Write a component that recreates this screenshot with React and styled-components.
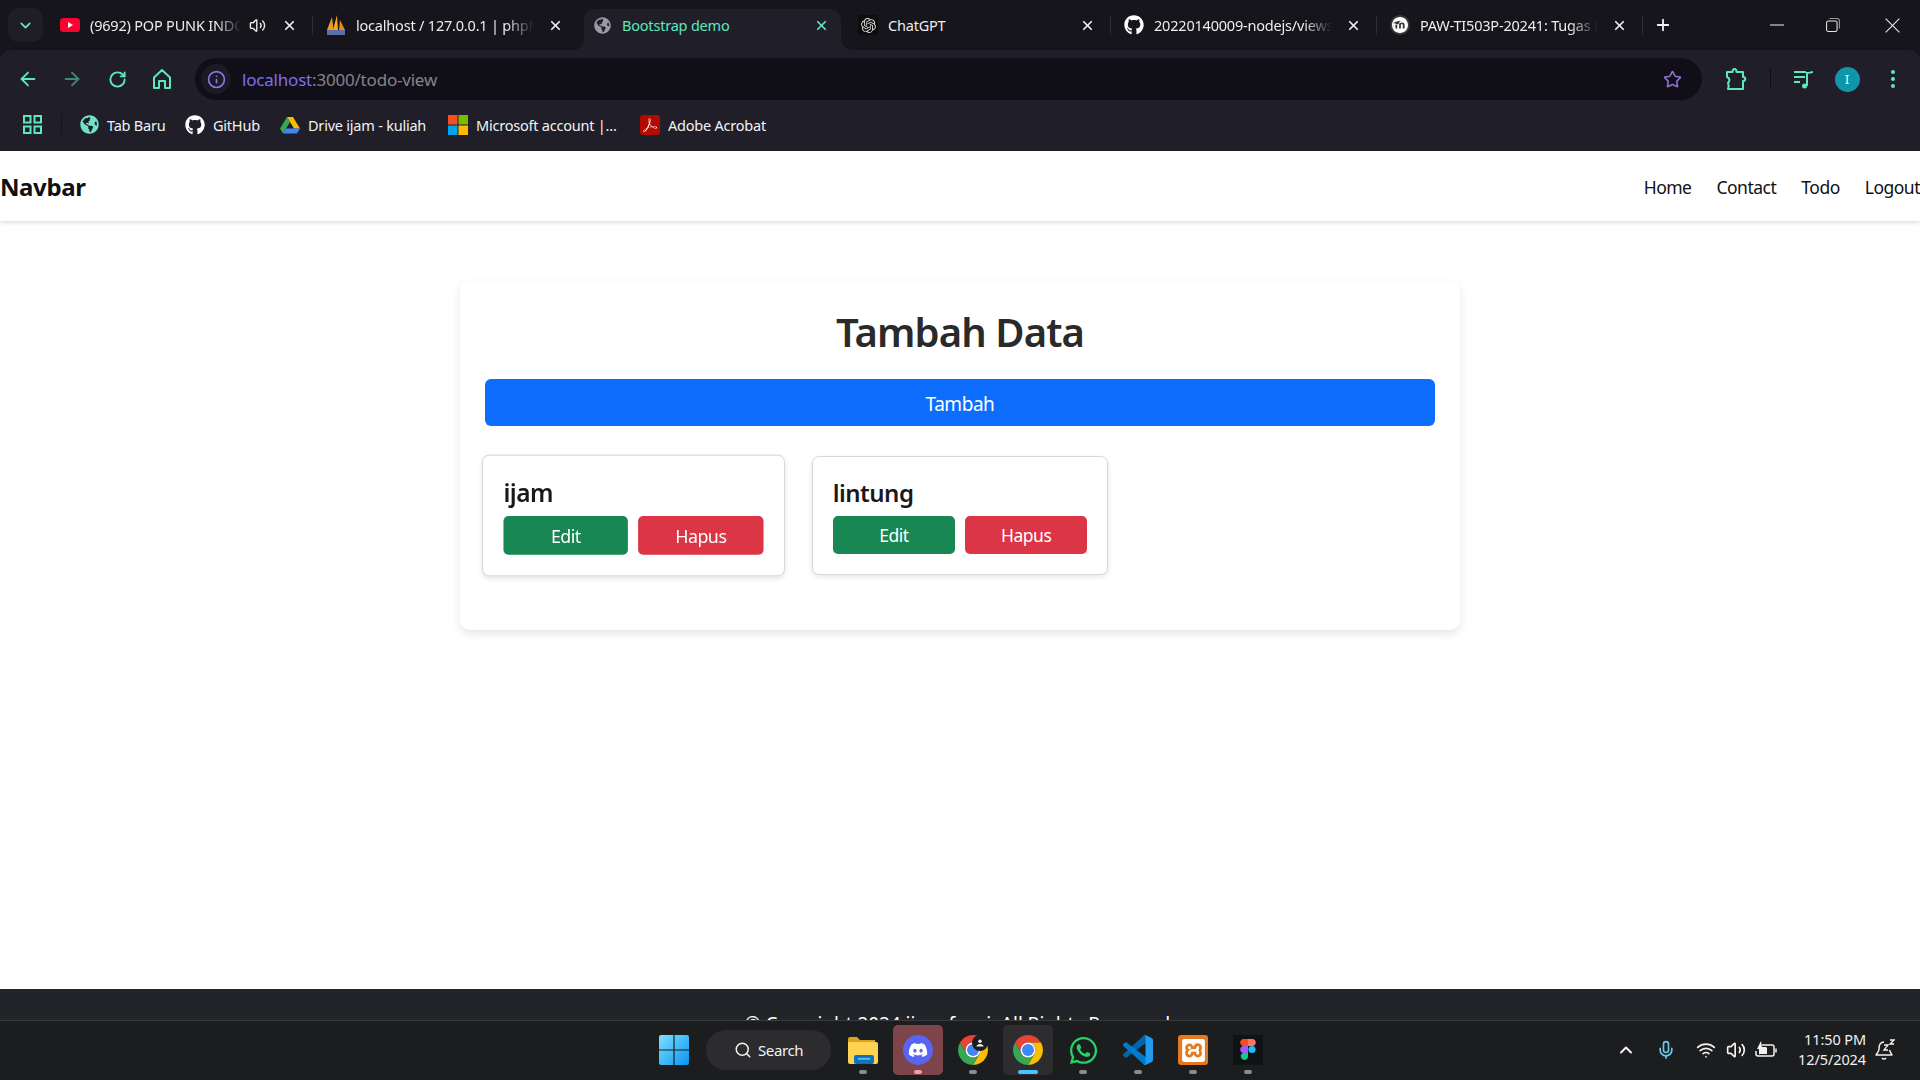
import styled, { createGlobalStyle } from 'styled-components';
import {
  ArrowLeft, ArrowRight, RotateCw, Info, Star, X, Plus, Volume2, Search, Mic, Wifi,
  ChevronUp, ChevronDown,
} from 'lucide-react';
import { FaGithub, FaGlobeAmericas, FaWhatsapp, FaDiscord } from 'react-icons/fa';
import { SiOpenai, SiMoodle, SiXampp, SiAdobeacrobatreader } from 'react-icons/si';

const MINT = '#5ce8bb';
const TOOLBAR = '#201f29';
const STRIP = '#16151c';
const UI_FONT = '"Noto Sans", "Open Sans", sans-serif';

const GlobalStyle = createGlobalStyle`
  html, body {
    margin: 0;
    padding: 0;
    background: #fff;
    overflow: hidden;
  }
  * {
    box-sizing: border-box;
  }
`;

const Screen = styled.div`
  width: 1920px;
  height: 1080px;
  display: flex;
  flex-direction: column;
  overflow: hidden;
  background: ${STRIP};
  font-family: ${UI_FONT};
`;

/* ---- tab strip ---- */
const TabStrip = styled.div`
  height: 50px;
  flex: none;
  display: flex;
  align-items: stretch;
  padding-left: 8px;
  color: #ececec;
`;

const TabMenu = styled.div`
  width: 35px;
  height: 34px;
  margin: 8px 1px 0 0;
  border-radius: 10px;
  background: #1f1e27;
  color: ${MINT};
  display: flex;
  align-items: center;
  justify-content: center;
`;

const TabItem = styled.div`
  position: relative;
  width: 266px;
  flex: none;
  display: flex;
  align-items: center;
  padding: 0 13px 0 16px;
  color: ${(p) => (p.$active ? MINT : '#ececec')};

  ${(p) => p.$active && `
    &::before {
      content: '';
      position: absolute;
      inset: 9px 1px 0 8px;
      background: ${TOOLBAR};
      border-radius: 11px 11px 0 0;
    }
    &::after {
      content: '';
      position: absolute;
      left: -2px;
      right: -9px;
      bottom: 0;
      height: 10px;
      background:
        radial-gradient(circle at 0 0, transparent 9.5px, ${TOOLBAR} 10px) left / 10px 10px no-repeat,
        radial-gradient(circle at 100% 0, transparent 9.5px, ${TOOLBAR} 10px) right / 10px 10px no-repeat;
    }
  `}
`;

const TabFavicon = styled.span`
  position: relative;
  z-index: 1;
  width: 20px;
  height: 20px;
  flex: none;
  display: flex;
  align-items: center;
  justify-content: center;
  margin-right: 10px;
  border-radius: ${(p) => (p.$round ? '50%' : '3px')};
  background: ${(p) => p.$bg || 'transparent'};
`;

const TabTitle = styled.span`
  position: relative;
  z-index: 1;
  flex: 1;
  min-width: 0;
  overflow: hidden;
  white-space: nowrap;
  font-size: 14.5px;
  letter-spacing: -0.2px;
  line-height: 20px;
  ${(p) => p.$fade && `
    -webkit-mask-image: linear-gradient(to right, #000 84%, transparent 100%);
    mask-image: linear-gradient(to right, #000 84%, transparent 100%);
  `}
`;

const TabButton = styled.span`
  position: relative;
  z-index: 1;
  flex: none;
  margin-left: ${(p) => p.$gap || 0}px;
  display: flex;
  align-items: center;
  justify-content: center;
`;

const TabSeparator = styled.span`
  position: absolute;
  right: -3px;
  top: 16px;
  width: 1px;
  height: 19px;
  background: #2e2d36;
`;

const NewTab = styled.div`
  width: 46px;
  display: flex;
  align-items: center;
  justify-content: center;
`;

const WindowControls = styled.div`
  margin-left: auto;
  display: grid;
  grid-template-columns: 50px 62px 56px;
  align-items: center;
  justify-items: center;
`;

/* ---- toolbar and bookmarks ---- */
const ToolbarArea = styled.div`
  flex: none;
  background: ${TOOLBAR};
  border-radius: 11px 11px 0 0;
`;

const Toolbar = styled.div`
  height: 50px;
  display: flex;
  align-items: flex-end;
  padding-left: 6px;
`;

const ToolbarRow = styled.div`
  height: 42px;
  flex: 1;
  display: flex;
  align-items: center;
`;

const NavButton = styled.span`
  width: 44px;
  flex: none;
  margin-left: ${(p) => p.$gap || 0}px;
  display: flex;
  justify-content: center;
  color: ${(p) => (p.$dim ? '#3f8a72' : MINT)};
`;

const AddressBar = styled.div`
  flex: 1;
  height: 42px;
  margin-left: 11px;
  border-radius: 21px;
  background: #100f18;
  display: flex;
  align-items: center;
  padding: 0 20px 0 6px;
`;

const SiteInfo = styled.span`
  width: 30px;
  height: 30px;
  border-radius: 50%;
  background: #1c1b25;
  color: #8d78e8;
  display: flex;
  align-items: center;
  justify-content: center;
  margin-right: 11px;
`;

const UrlText = styled.div`
  flex: 1;
  font-size: 17px;
  letter-spacing: -0.2px;
  color: #85838a;
`;

const UrlHost = styled.span`
  color: #7f6cf2;
`;

const ToolbarActions = styled.div`
  flex: none;
  display: grid;
  grid-template-columns: 68px 1px 65px 24px 60px;
  align-items: center;
  justify-items: center;
`;

const ToolbarDivider = styled.span`
  width: 1px;
  height: 20px;
  background: #0f0e14;
`;

const Avatar = styled.span`
  width: 25px;
  height: 25px;
  margin-right: 2px;
  border-radius: 50%;
  background: #0e97a8;
  color: #fff;
  font-size: 12px;
  display: flex;
  align-items: center;
  justify-content: center;
`;

const Dots = styled.span`
  width: 5px;
  display: flex;
  flex-direction: column;
  gap: 3px;
  margin-left: 6px;
  span {
    width: 4px;
    height: 4px;
    border-radius: 50%;
    background: ${MINT};
  }
`;

const BookmarkBar = styled.div`
  height: 51px;
  display: flex;
  align-items: center;
  padding-bottom: 2px;
  color: #f2f2f2;
  font-size: 14.5px;
  letter-spacing: -0.22px;
`;

const AppsButton = styled.span`
  width: 61px;
  flex: none;
  display: flex;
  justify-content: center;
  padding-left: 3px;
  color: ${MINT};
`;

const BookmarkDivider = styled.span`
  width: 1px;
  height: 20px;
  margin-right: 18px;
  background: #16151c;
`;

const Bookmark = styled.div`
  width: ${(p) => (p.$w ? `${p.$w}px` : 'auto')};
  flex: none;
  display: flex;
  align-items: center;
  gap: 8px;
  white-space: nowrap;
`;

/* ---- page ---- */
const Navbar = styled.nav`
  height: 70px;
  flex: none;
  position: relative;
  z-index: 1;
  background: #fff;
  box-shadow: 0 2px 4px rgba(0, 0, 0, 0.12);
  display: flex;
  align-items: center;
  justify-content: space-between;
`;

const Brand = styled.div`
  font-size: 24px;
  font-weight: 700;
  letter-spacing: -0.4px;
  color: #111;
`;

const NavLinks = styled.div`
  display: flex;
  gap: 25px;
  padding-top: 1px;
  font-size: 17.5px;
  letter-spacing: -0.5px;
  color: #111;
`;

const Main = styled.main`
  flex: 1;
  background: #fff;
  padding-top: 60px;
`;

const Panel = styled.section`
  width: 1000px;
  margin: 0 auto;
  padding: 27px 10px 55px;
  border-radius: 10px;
  background: #fff;
  box-shadow: 0 4px 10px rgba(0, 0, 0, 0.1);
`;

const Heading = styled.h1`
  margin: 0 0 23px;
  text-align: center;
  font-size: 40px;
  line-height: 48px;
  font-weight: 600;
  letter-spacing: -0.9px;
  color: #2a2a2a;
`;

const AddButton = styled.button`
  display: block;
  width: 950px;
  height: 47px;
  margin: 0 auto 30px;
  padding: 2px 0 0;
  border: 0;
  border-radius: 6px;
  background: #0d6efd;
  color: #fff;
  font-family: inherit;
  font-size: 19px;
  letter-spacing: -0.45px;
`;

const TodoGrid = styled.div`
  display: grid;
  grid-template-columns: repeat(3, 326.67px);
`;

const TodoCell = styled.div`
  padding: 0 15px;
`;

const TodoCard = styled.article`
  height: 119px;
  padding: 20px;
  border: 1px solid #d8d8d8;
  border-radius: 7px;
  background: #fff;
  box-shadow: 0 2px 5px rgba(0, 0, 0, 0.1);
  transform: ${(p) => (p.$hovered ? 'scale(1.02)' : 'none')};
`;

const TodoTitle = styled.h5`
  margin: 0 0 8px;
  font-size: 24px;
  line-height: 31px;
  font-weight: 600;
  letter-spacing: -0.5px;
  color: #191919;
`;

const TodoActions = styled.div`
  display: grid;
  grid-template-columns: 1fr 1fr;
  gap: 10px;
`;

const ActionButton = styled.button`
  height: 38px;
  padding: 0;
  border: 0;
  border-radius: 5px;
  background: ${(p) => (p.$danger ? '#dc3545' : '#198754')};
  color: #fff;
  font-family: inherit;
  font-size: 17.5px;
  letter-spacing: -0.5px;
`;

const Footer = styled.footer`
  height: 31px;
  flex: none;
  overflow: hidden;
  background: #212529;
  color: #fff;
  text-align: center;
  padding-top: 23px;
  font-size: 19px;
  line-height: 24px;
  letter-spacing: -0.05px;
`;

/* ---- taskbar ---- */
const Taskbar = styled.div`
  height: 60px;
  flex: none;
  display: flex;
  align-items: center;
  padding-bottom: 1px;
  background: #1c1d1f;
  border-top: 1px solid #3a3b3d;
  color: #f2f2f2;
`;

const StartButton = styled.span`
  margin-left: 659px;
  flex: none;
  display: flex;
`;

const SearchPill = styled.div`
  width: 125px;
  height: 40px;
  margin-left: 17px;
  border-radius: 20px;
  background: #2c2c2e;
  flex: none;
  display: flex;
  align-items: center;
  padding-left: 28px;
  gap: 6px;
  font-size: 15px;
  letter-spacing: -0.4px;
`;

const TaskApps = styled.div`
  margin-left: 7px;
  display: flex;
  gap: 5px;
`;

const TaskApp = styled.div`
  position: relative;
  width: 50px;
  height: 50px;
  border-radius: 5px;
  background: ${(p) => p.$bg || 'transparent'};
  display: flex;
  align-items: center;
  justify-content: center;
  &::after {
    content: '';
    position: absolute;
    left: 50%;
    bottom: 1px;
    width: ${(p) => (p.$running ? 20 : 8)}px;
    height: 4px;
    border-radius: 2px;
    transform: translateX(-50%);
    background: ${(p) => p.$dot || '#8b8b8b'};
  }
`;

const Tray = styled.div`
  margin-left: auto;
  padding-right: 23px;
  display: flex;
  align-items: center;
`;

const TrayIcon = styled.span`
  width: ${(p) => p.$w}px;
  display: flex;
  justify-content: center;
  color: ${(p) => p.$color || '#f2f2f2'};
`;

const Clock = styled.div`
  width: 80px;
  margin-right: 7px;
  margin-top: -2px;
  text-align: right;
  font-size: 14.5px;
  line-height: 20px;
  letter-spacing: -0.1px;
  white-space: nowrap;
`;

/* ---- drawn icons ---- */
const YoutubeIcon = () => (
  <svg width="20" height="14" viewBox="0 0 20 14">
    <rect width="20" height="14" rx="3.5" fill="#ff0033" />
    <path d="M8 4l5 3-5 3z" fill="#fff" />
  </svg>
);

const PmaIcon = () => (
  <svg width="20" height="22" viewBox="0 0 20 22">
    <path d="M1 16L6 3l1.5 13z" fill="#f29b1d" />
    <path d="M7 16L11 1l1 15z" fill="#f7a823" />
    <path d="M13 16l1-10 5 10z" fill="#e98a12" />
    <rect x="1" y="16" width="18" height="5" fill="#5a6fa8" />
  </svg>
);

const AppsIcon = () => (
  <svg width="19" height="19" viewBox="0 0 19 19" fill="none" stroke="currentColor" strokeWidth="2">
    <rect x="1" y="1" width="6.5" height="6.5" />
    <rect x="11.5" y="1" width="6.5" height="6.5" />
    <rect x="1" y="11.5" width="6.5" height="6.5" />
    <rect x="11.5" y="11.5" width="6.5" height="6.5" />
  </svg>
);

const HomeIcon = () => (
  <svg width="20" height="22" viewBox="0 0 20 22" fill="none" stroke="currentColor" strokeWidth="2" strokeLinejoin="round">
    <path d="M2 9.5L10 2l8 7.5V20h-5v-7H7v7H2z" />
  </svg>
);

const ExtensionIcon = () => (
  <svg width="22" height="24" viewBox="0 0 22 24" fill="none" stroke="currentColor" strokeWidth="2" strokeLinejoin="round">
    <path d="M2 5h5.5c0-4 4-4 4 0H18v5c3 0 3 4 0 4v8H3c1-2 1-4 0-6 2-2 2-5-1-6z" />
  </svg>
);

const MusicIcon = () => (
  <svg width="20" height="19" viewBox="0 0 20 19" fill="none" stroke="currentColor" strokeWidth="2">
    <path d="M0 2h12M0 7h11M0 12h6" />
    <path d="M13 16V3c2 0 5-1 6-1" />
    <circle cx="10.5" cy="16" r="2.5" fill="currentColor" stroke="none" />
  </svg>
);

const WinIcon = ({ children, size }) => (
  <svg width={size} height={size} viewBox="0 0 12 12" fill="none" stroke="#e8e8e8" strokeWidth="0.9">
    {children}
  </svg>
);

const DriveIcon = () => (
  <svg width="20" height="18" viewBox="0 0 20 18">
    <path d="M7 1h6l7 11.5h-6z" fill="#fbbc04" />
    <path d="M7 1L0 12.5l3 5L10 6z" fill="#34a853" />
    <path d="M6 12.5h14l-3 5H3z" fill="#4285f4" />
  </svg>
);

const MicrosoftIcon = () => (
  <svg width="20" height="20" viewBox="0 0 20 20">
    <rect width="9.5" height="9.5" fill="#f25022" />
    <rect x="10.5" width="9.5" height="9.5" fill="#7fba00" />
    <rect y="10.5" width="9.5" height="9.5" fill="#00a4ef" />
    <rect x="10.5" y="10.5" width="9.5" height="9.5" fill="#ffb900" />
  </svg>
);

const AcrobatBadge = styled.span`
  width: 20px;
  height: 20px;
  border-radius: 3px;
  background: #b30b00;
  color: #fff;
  display: flex;
  align-items: center;
  justify-content: center;
`;

const WindowsLogo = () => (
  <svg width="30" height="30" viewBox="0 0 30 30">
    <defs>
      <linearGradient id="winBlue" x1="0" y1="0" x2="1" y2="1">
        <stop offset="0" stopColor="#7fe0ff" />
        <stop offset="1" stopColor="#0795f2" />
      </linearGradient>
    </defs>
    <path d="M0 2a2 2 0 0 1 2-2h12.4v14.4H0zM15.6 0H28a2 2 0 0 1 2 2v12.4H15.6zM0 15.6h14.4V30H2a2 2 0 0 1-2-2zM15.6 15.6H30V28a2 2 0 0 1-2 2H15.6z" fill="url(#winBlue)" />
  </svg>
);

const FolderIcon = () => (
  <svg width="30" height="27" viewBox="0 0 30 27">
    <path d="M0 2a2 2 0 0 1 2-2h7l3 3h15v8H0z" fill="#dba21b" />
    <path d="M0 5h28a2 2 0 0 1 2 2v18a2 2 0 0 1-2 2H2a2 2 0 0 1-2-2z" fill="#ffd352" />
    <rect x="6" y="18" width="20" height="9" rx="2" fill="#0e74bd" />
    <rect x="10" y="21" width="12" height="1.6" fill="#6cc2f0" />
  </svg>
);

const ChromeLogo = () => (
  <svg width="30" height="30" viewBox="4 4 40 40">
    <path d="M6.68 14A20 20 0 0 1 41.32 14H24A10 10 0 0 0 15.34 29z" fill="#ea4335" />
    <path d="M41.32 14A20 20 0 0 1 24 44L32.66 29A10 10 0 0 0 24 14z" fill="#fbbc04" />
    <path d="M24 44A20 20 0 0 1 6.68 14L15.34 29A10 10 0 0 0 32.66 29z" fill="#34a853" />
    <circle cx="24" cy="24" r="10" fill="#fff" />
    <circle cx="24" cy="24" r="8" fill="#4285f4" />
  </svg>
);

const ProfileBadge = styled.span`
  position: absolute;
  top: 10px;
  right: 10px;
  width: 16px;
  height: 16px;
  border-radius: 50%;
  background: #1c1d1f;
  display: flex;
  align-items: center;
  justify-content: center;
`;

const ProfileGlyph = () => (
  <svg width="8" height="8" viewBox="0 0 9 9" fill="#eee">
    <circle cx="4.5" cy="2.5" r="2" />
    <path d="M0.5 8.5c0-2 2-3 4-3s4 1 4 3z" />
  </svg>
);

const DiscordBadge = styled.span`
  width: 30px;
  height: 30px;
  border-radius: 50%;
  background: #5865f2;
  color: #fff;
  display: flex;
  align-items: center;
  justify-content: center;
`;

const VsCodeLogo = () => (
  <svg width="30" height="30" viewBox="0 0 100 100">
    <path d="M96.46 10.8 75.86.9a6.2 6.2 0 0 0-7.1 1.2L1.3 63.6a4.2 4.2 0 0 0 0 6.2l5.5 5a4.2 4.2 0 0 0 5.3.2L93.4 13.3c2.7-2.1 6.6-.2 6.6 3.3v-.2a6.3 6.3 0 0 0-3.54-5.6Z" fill="#0065a9" />
    <path d="M96.46 89.2 75.86 99.1a6.2 6.2 0 0 1-7.1-1.2L1.3 36.4a4.2 4.2 0 0 1 0-6.2l5.5-5a4.2 4.2 0 0 1 5.3-.2L93.4 86.7c2.7 2.1 6.6.2 6.6-3.3v.2a6.3 6.3 0 0 1-3.54 5.6Z" fill="#007acc" />
    <path d="M75.86 99.1a6.2 6.2 0 0 1-7.1-1.2c2.3 2.3 6.24.7 6.24-2.6V4.7c0-3.3-3.94-4.9-6.24-2.6a6.2 6.2 0 0 1 7.1-1.2l20.6 9.9a6.3 6.3 0 0 1 3.54 5.6v67.2a6.3 6.3 0 0 1-3.54 5.6Z" fill="#1f9cf0" />
  </svg>
);

const XamppBadge = styled.span`
  width: 30px;
  height: 30px;
  border-radius: 3px;
  background: #e5791f;
  color: #fff;
  display: flex;
  align-items: center;
  justify-content: center;
`;

const FigmaLogo = () => (
  <svg width="30" height="30" viewBox="0 0 30 30">
    <rect width="30" height="30" fill="#111213" />
    <path d="M15 4h-5a3.600 3.600 0 0 0 0 7h5z" fill="#f24e1e" />
    <path d="M15 4h5a3.600 3.600 0 0 1 0 7h-5z" fill="#ff7262" />
    <path d="M15 11h-5a3.600 3.600 0 0 0 0 7h5z" fill="#a259ff" />
    <circle cx="19" cy="14.5" r="3.600" fill="#1abcfe" />
    <path d="M10 18h5v3.500a3.600 3.600 0 1 1-5-3.500z" fill="#0acf83" />
  </svg>
);

const BatteryIcon = () => (
  <svg width="22" height="20" viewBox="0 0 22 20" fill="none" stroke="currentColor" strokeWidth="1.5">
    <path d="M7 5h10a2 2 0 0 1 2 2v7a2 2 0 0 1-2 2H3a2 2 0 0 1-2-2v-3" />
    <path d="M21 8.500v4" />
    <path d="M6 1L2 9h5l-3 6 8-8H7z" fill="currentColor" stroke="none" />
    <rect x="4" y="8" width="8" height="6" fill="currentColor" stroke="none" />
  </svg>
);

const BellSleepIcon = () => (
  <svg width="20" height="22" viewBox="0 0 20 22" fill="none" stroke="currentColor" strokeWidth="1.4">
    <path d="M9 3C5 3 4 7 4 10c0 3-2 4-3 6h16c-1-2-2-3-2.500-5" strokeLinejoin="round" />
    <path d="M7 19c1 1.500 3 1.500 4 0" />
    <path d="M9 6h4l-4 5h4M15 1h4l-4 4h4" strokeWidth="1.300" />
  </svg>
);

const TABS = [
  { title: '(9692) POP PUNK INDONESIA', icon: <YoutubeIcon />, fade: true, audio: true, sep: true },
  { title: 'localhost / 127.0.0.1 | phpMyAdmin', icon: <PmaIcon />, fade: true },
  { title: 'Bootstrap demo', icon: <FaGlobeAmericas size={17} color="#9a9aa2" />, active: true },
  { title: 'ChatGPT', icon: <SiOpenai size={15} color="#d8d8d8" />, bg: '#0d0d0d', sep: true },
  { title: '20220140009-nodejs/views at main', icon: <FaGithub size={20} color="#fff" />, fade: true, sep: true },
  { title: 'PAW-TI503P-20241: Tugas Praktikum', icon: <SiMoodle size={16} color="#fff" />, bg: '#3a3a3a', round: true, fade: true, sep: true },
];

const TODOS = [
  { name: 'ijam', hovered: true },
  { name: 'lintung' },
];

export default function App() {
  return (
    <Screen>
      <GlobalStyle />

      <TabStrip>
        <TabMenu>
          <ChevronDown size={17} strokeWidth={2.6} />
        </TabMenu>
        {TABS.map((tab) => (
          <TabItem key={tab.title} $active={tab.active}>
            <TabFavicon $bg={tab.bg} $round={tab.round}>{tab.icon}</TabFavicon>
            <TabTitle $fade={tab.fade}>{tab.title}</TabTitle>
            {tab.audio && (
              <TabButton $gap={8}>
                <Volume2 size={17} color="#e8e8e8" />
              </TabButton>
            )}
            <TabButton $gap={tab.audio ? 16 : 14}>
              <X size={15} strokeWidth={2.8} />
            </TabButton>
            {tab.sep && <TabSeparator />}
          </TabItem>
        ))}
        <NewTab>
          <Plus size={18} strokeWidth={2.4} color="#f2f2f2" />
        </NewTab>
        <WindowControls>
          <WinIcon size={14}><path d="M0 6h12" /></WinIcon>
          <WinIcon size={14}>
            <rect x="0.5" y="2.500" width="9" height="9" rx="1.500" />
            <path d="M3 0.500h6.500a2 2 0 0 1 2 2V9" stroke="#9a9a9a" />
          </WinIcon>
          <WinIcon size={15}><path d="M0.500 0.500l11 11M11.500 0.500l-11 11" /></WinIcon>
        </WindowControls>
      </TabStrip>

      <ToolbarArea>
        <Toolbar>
          <ToolbarRow>
            <NavButton><ArrowLeft size={22} /></NavButton>
            <NavButton $dim><ArrowRight size={22} /></NavButton>
            <NavButton $gap={1}><RotateCw size={19} strokeWidth={2.4} /></NavButton>
            <NavButton $gap={1}><HomeIcon /></NavButton>
            <AddressBar>
              <SiteInfo><Info size={19} /></SiteInfo>
              <UrlText><UrlHost>localhost</UrlHost>:3000/todo-view</UrlText>
              <Star size={19} color="#8f74d4" strokeWidth={2} />
            </AddressBar>
            <ToolbarActions>
              <NavButton><ExtensionIcon /></NavButton>
              <ToolbarDivider />
              <NavButton><MusicIcon /></NavButton>
              <Avatar>I</Avatar>
              <Dots><span /><span /><span /></Dots>
            </ToolbarActions>
          </ToolbarRow>
        </Toolbar>

        <BookmarkBar>
          <AppsButton><AppsIcon /></AppsButton>
          <BookmarkDivider />
          <Bookmark $w={105}><FaGlobeAmericas size={19} color="#6fe3c4" />Tab Baru</Bookmark>
          <Bookmark $w={95}><FaGithub size={20} color="#fff" />GitHub</Bookmark>
          <Bookmark $w={168}><DriveIcon />Drive ijam - kuliah</Bookmark>
          <Bookmark $w={192}><MicrosoftIcon />Microsoft account |...</Bookmark>
          <Bookmark>
            <AcrobatBadge><SiAdobeacrobatreader size={14} /></AcrobatBadge>
            Adobe Acrobat
          </Bookmark>
        </BookmarkBar>
      </ToolbarArea>

      <Navbar>
        <Brand>Navbar</Brand>
        <NavLinks>
          <span>Home</span>
          <span>Contact</span>
          <span>Todo</span>
          <span>Logout</span>
        </NavLinks>
      </Navbar>

      <Main>
        <Panel>
          <Heading>Tambah Data</Heading>
          <AddButton>Tambah</AddButton>
          <TodoGrid>
            {TODOS.map((todo) => (
              <TodoCell key={todo.name}>
                <TodoCard $hovered={todo.hovered}>
                  <TodoTitle>{todo.name}</TodoTitle>
                  <TodoActions>
                    <ActionButton>Edit</ActionButton>
                    <ActionButton $danger>Hapus</ActionButton>
                  </TodoActions>
                </TodoCard>
              </TodoCell>
            ))}
          </TodoGrid>
        </Panel>
      </Main>

      <Footer>© Copyright 2024 ijam fauzi. All Rights Reserved.</Footer>

      <Taskbar>
        <StartButton><WindowsLogo /></StartButton>
        <SearchPill>
          <Search size={18} />
          Search
        </SearchPill>
        <TaskApps>
          <TaskApp><FolderIcon /></TaskApp>
          <TaskApp $bg="#7d444a" $dot="#f59aa6"><DiscordBadge><FaDiscord size={20} /></DiscordBadge></TaskApp>
          <TaskApp>
            <ChromeLogo />
            <ProfileBadge><ProfileGlyph /></ProfileBadge>
          </TaskApp>
          <TaskApp $bg="#2d2d30" $dot="#4cc2ff" $running><ChromeLogo /></TaskApp>
          <TaskApp><FaWhatsapp size={31} color="#25d366" /></TaskApp>
          <TaskApp><VsCodeLogo /></TaskApp>
          <TaskApp><XamppBadge><SiXampp size={23} /></XamppBadge></TaskApp>
          <TaskApp><FigmaLogo /></TaskApp>
        </TaskApps>
        <Tray>
          <TrayIcon $w={40}><ChevronUp size={20} strokeWidth={2.4} /></TrayIcon>
          <TrayIcon $w={40} $color="#6cc7e8"><Mic size={20} /></TrayIcon>
          <TrayIcon $w={40}><Wifi size={20} /></TrayIcon>
          <TrayIcon $w={20}><Volume2 size={20} /></TrayIcon>
          <TrayIcon $w={40}><BatteryIcon /></TrayIcon>
          <Clock>
            <div>11:50 PM</div>
            <div>12/5/2024</div>
          </Clock>
          <TrayIcon $w={24}><BellSleepIcon /></TrayIcon>
        </Tray>
      </Taskbar>
    </Screen>
  );
}
